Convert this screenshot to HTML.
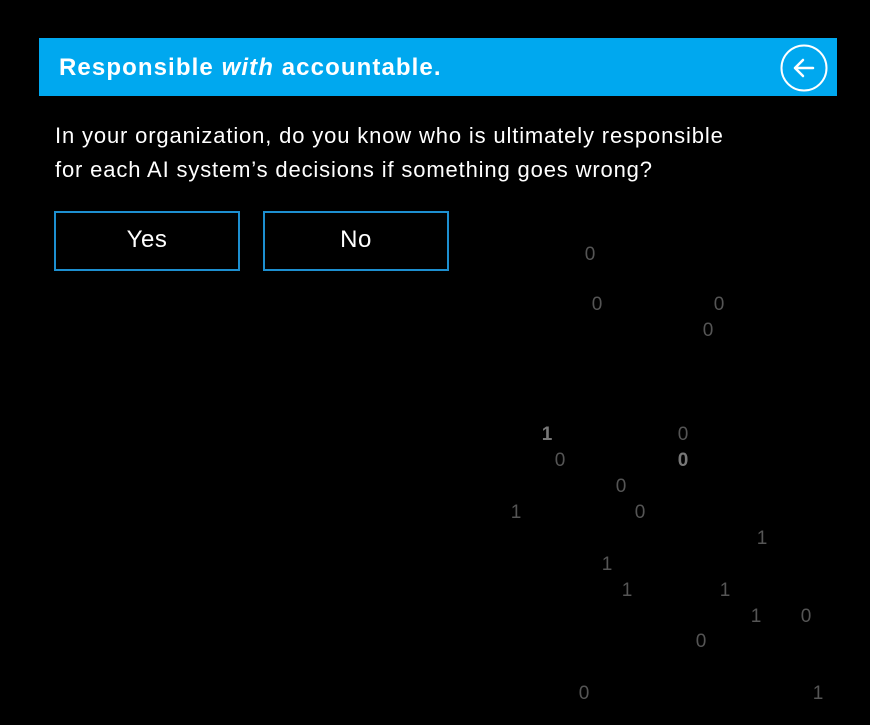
<!DOCTYPE html>
<html><head><meta charset="utf-8"><style>
body{margin:0;background:#000;width:870px;height:725px;overflow:hidden;position:relative;font-family:"Liberation Sans","DejaVu Sans",sans-serif;color:#fff}
.bar{position:absolute;left:39px;top:38px;width:798px;height:58px;background:#00a8ef}
.bar h1{margin:0;position:absolute;left:20px;top:16px;font-size:24px;font-weight:bold;letter-spacing:1.1px}
.q{position:absolute;left:55px;top:119px;font-size:22px;line-height:34px;letter-spacing:0.85px}
.btn{position:absolute;top:211px;width:182px;height:56px;border:2px solid #1d8fd0;text-align:center;line-height:54px;font-size:24px;letter-spacing:0.5px}
.d{position:absolute;color:#555;font-size:19px;transform:translate(-50%,-45%)}
.b{font-weight:bold;color:#777}
</style></head><body>
<div class="bar"><h1>Responsible <i>with</i> accountable.</h1>
<svg style="position:absolute;left:741px;top:6px" width="48" height="48" viewBox="0 0 48 48"><circle cx="24" cy="24" r="22.5" fill="none" stroke="#fff" stroke-width="2"/><path d="M33 24H15M23 16l-8 8 8 8" fill="none" stroke="#fff" stroke-width="2.5" stroke-linecap="round" stroke-linejoin="round"/></svg></div>
<div class="q">In your organization, do you know who is ultimately responsible<br>for each AI system’s decisions if something goes wrong?</div>
<div class="btn" style="left:54px">Yes</div>
<div class="btn" style="left:263px">No</div>
<span class="d" style="left:590px;top:254px">0</span>
<span class="d" style="left:597px;top:304px">0</span>
<span class="d" style="left:719px;top:304px">0</span>
<span class="d" style="left:708px;top:330px">0</span>
<span class="d b" style="left:547px;top:434px">1</span>
<span class="d" style="left:683px;top:434px">0</span>
<span class="d" style="left:560px;top:460px">0</span>
<span class="d b" style="left:683px;top:460px">0</span>
<span class="d" style="left:621px;top:486px">0</span>
<span class="d" style="left:516px;top:512px">1</span>
<span class="d" style="left:640px;top:512px">0</span>
<span class="d" style="left:762px;top:538px">1</span>
<span class="d" style="left:607px;top:564px">1</span>
<span class="d" style="left:627px;top:590px">1</span>
<span class="d" style="left:725px;top:590px">1</span>
<span class="d" style="left:756px;top:616px">1</span>
<span class="d" style="left:806px;top:616px">0</span>
<span class="d" style="left:701px;top:641px">0</span>
<span class="d" style="left:584px;top:693px">0</span>
<span class="d" style="left:818px;top:693px">1</span>
</body></html>
